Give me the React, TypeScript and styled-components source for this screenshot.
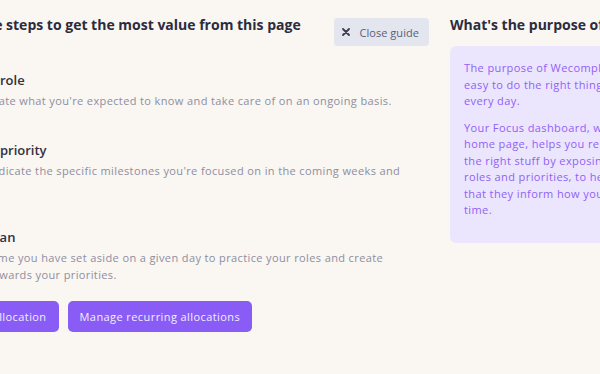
import React from 'react';
import styled, { createGlobalStyle } from 'styled-components';

const GlobalStyle = createGlobalStyle`
  html, body {
    margin: 0;
    padding: 0;
    background: #faf6f1;
    overflow: hidden;
  }
  body {
    font-family: 'Open Sans', 'Liberation Sans', sans-serif;
    -webkit-font-smoothing: antialiased;
  }
`;

const Page = styled.div`
  display: flex;
  gap: 21px;
  width: 780px;
  height: 374px;
  margin-left: -59px;
  padding-top: 14px;
  box-sizing: border-box;
`;

const Guide = styled.section`
  width: 488px;
  flex: none;
`;

const Header = styled.div`
  display: flex;
  justify-content: space-between;
  align-items: flex-start;
`;

const Title = styled.h2`
  margin: 0;
  font-size: 14px;
  font-weight: 700;
  line-height: 22px;
  color: #2b2c3e;
  white-space: nowrap;
`;

const CloseButton = styled.button`
  flex: none;
  display: flex;
  align-items: center;
  gap: 9px;
  height: 28px;
  margin-top: 4px;
  padding: 0 10px 0 8px;
  border: none;
  border-radius: 4px;
  background: #e3e5ef;
  color: #5d6074;
  font: inherit;
  font-size: 11px;
  letter-spacing: 0.05px;
  white-space: nowrap;
  cursor: pointer;
`;

const Steps = styled.ol`
  list-style: none;
  margin: 24px 0 0;
  padding: 0;
  display: flex;
  flex-direction: column;
  gap: 31px;
`;

const Step = styled.li`
  display: flex;
  gap: 23px;
`;

const StepNumber = styled.span`
  flex: none;
  width: 24px;
  height: 24px;
  border-radius: 50%;
  background: #e3e5ef;
  color: #5d6074;
  font-size: 11px;
  line-height: 24px;
  text-align: center;
`;

const StepTitle = styled.h3`
  margin: 0 0 2px;
  font-size: 13px;
  font-weight: 600;
  line-height: 20px;
  color: #2f3043;
`;

const StepText = styled.p`
  margin: 0;
  font-size: 11px;
  line-height: 17px;
  letter-spacing: 0.38px;
  color: #8d8ea2;
  white-space: nowrap;
`;

const Actions = styled.div`
  display: flex;
  gap: 9px;
  margin-top: 18px;
`;

const PrimaryButton = styled.button`
  height: 31px;
  padding: 0 12px;
  border: none;
  border-radius: 5px;
  background: #8a5cf6;
  color: #f3eeff;
  font: inherit;
  font-size: 11px;
  letter-spacing: 0.42px;
  white-space: nowrap;
  cursor: pointer;
`;

const Aside = styled.aside`
  width: 300px;
  flex: none;
`;

const AsideTitle = styled(Title)`
  margin-bottom: 10px;
`;

const Note = styled.div`
  padding: 14px;
  border-radius: 6px;
  background: #ece5fe;
`;

const NoteText = styled.p`
  margin: 0 0 10px;
  font-size: 11px;
  line-height: 16.5px;
  letter-spacing: 0.4px;
  color: #8f62f5;
  white-space: nowrap;
`;

const XIcon = () => (
  <svg width="8" height="8" viewBox="0 0 8 8" aria-hidden>
    <path d="M1 1 L7 7 M7 1 L1 7" stroke="#3a3c4e" strokeWidth="1.8" strokeLinecap="round" />
  </svg>
);

const steps = [
  {
    title: 'A role',
    text: ["State what you're expected to know and take care of on an ongoing basis."],
  },
  {
    title: 'A priority',
    text: ["Indicate the specific milestones you're focused on in the coming weeks and", 'it.'],
  },
  {
    title: 'Plan',
    text: [
      'Time you have set aside on a given day to practice your roles and create',
      'towards your priorities.',
    ],
  },
];

const App: React.FC = () => {
  return (
    <>
      <GlobalStyle />
      <Page>
        <Guide>
          <Header>
            <Title>Do these steps to get the most value from this page</Title>
            <CloseButton>
              <XIcon />
              Close guide
            </CloseButton>
          </Header>
          <Steps>
            {steps.map((step, i) => (
              <Step key={step.title}>
                <StepNumber>{i + 1}</StepNumber>
                <div>
                  <StepTitle>{step.title}</StepTitle>
                  {step.text.map((line) => (
                    <StepText key={line}>{line}</StepText>
                  ))}
                </div>
              </Step>
            ))}
          </Steps>
          <Actions>
            <PrimaryButton>Create allocation</PrimaryButton>
            <PrimaryButton>Manage recurring allocations</PrimaryButton>
          </Actions>
        </Guide>
        <Aside>
          <AsideTitle>What's the purpose of this page?</AsideTitle>
          <Note>
            <NoteText>
              The purpose of Wecomplete is to make it
              <br />
              easy to do the right things, the right way,
              <br />
              every day.
            </NoteText>
            <NoteText>
              Your Focus dashboard, which is your
              <br />
              home page, helps you remember to do
              <br />
              the right stuff by exposing your
              <br />
              roles and priorities, to help ensure
              <br />
              that they inform how you spend your
              <br />
              time.
            </NoteText>
          </Note>
        </Aside>
      </Page>
    </>
  );
};

export default App;
